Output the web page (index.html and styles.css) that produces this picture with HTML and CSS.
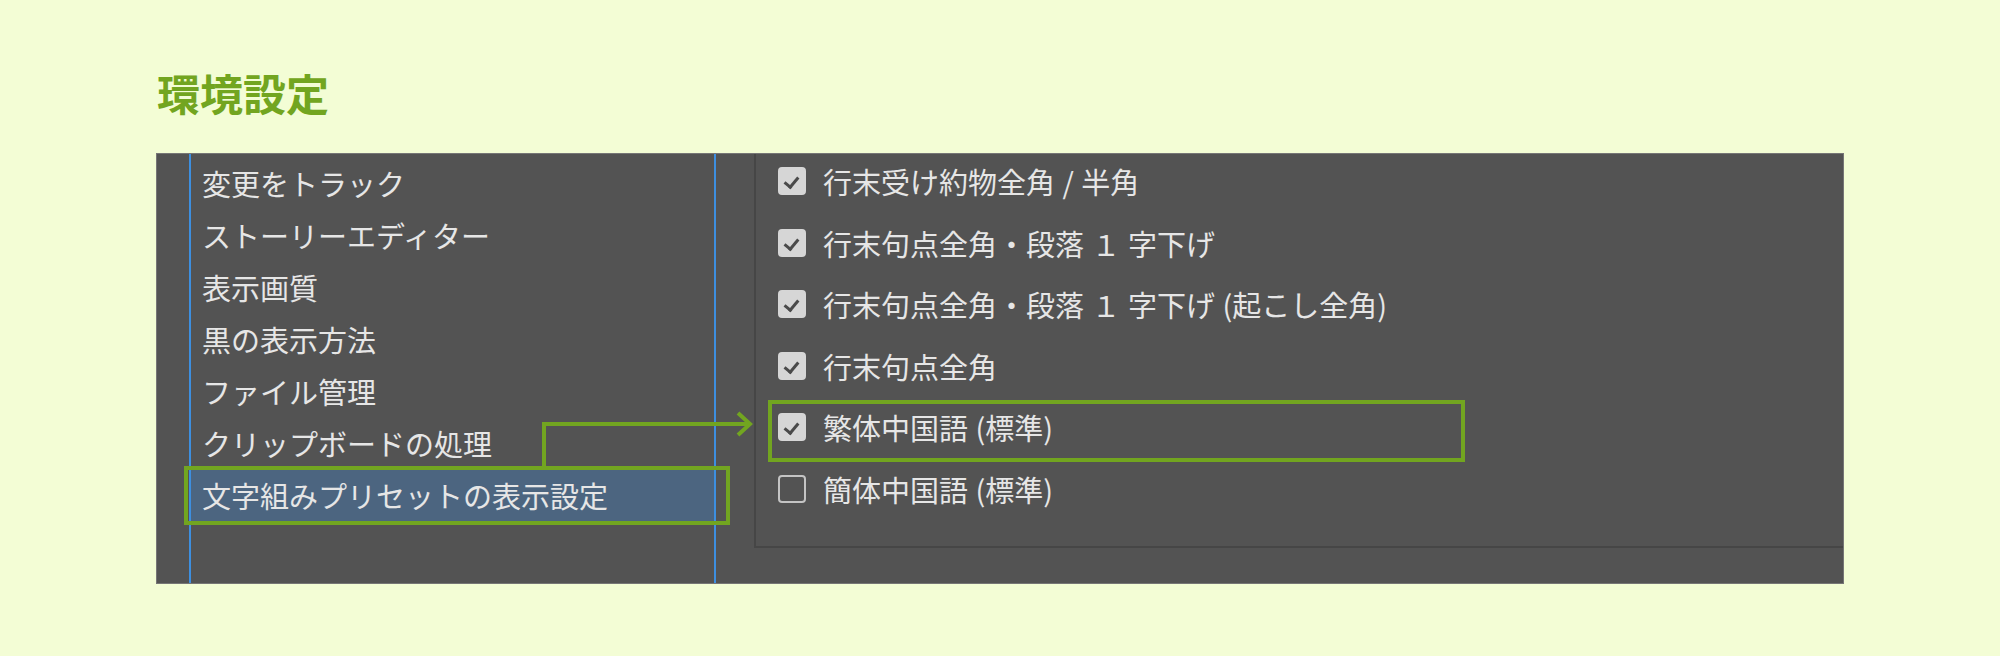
FILE: index.html
```html
<!DOCTYPE html>
<html lang="ja">
<head>
  <meta charset="UTF-8">
  <title>環境設定</title>
  <link rel="stylesheet" href="styles.css">
</head>
<body>
  <main class="page">
    <h1 class="title">環境設定</h1>

    <div class="prefs">
      <div class="gutter"></div>

      <ul class="nav">
        <li>変更をトラック</li>
        <li>ストーリーエディター</li>
        <li>表示画質</li>
        <li>黒の表示方法</li>
        <li>ファイル管理</li>
        <li>クリップボードの処理</li>
        <li class="selected">文字組みプリセットの表示設定</li>
      </ul>

      <div class="spacer"></div>

      <div class="options">
        <label class="option"><span class="check on"></span>行末受け約物全角 / 半角</label>
        <label class="option"><span class="check on"></span>行末句点全角・段落 １ 字下げ</label>
        <label class="option"><span class="check on"></span>行末句点全角・段落 １ 字下げ (起こし全角)</label>
        <label class="option"><span class="check on"></span>行末句点全角</label>
        <label class="option"><span class="check on"></span>繁体中国語 (標準)</label>
        <label class="option"><span class="check"></span>簡体中国語 (標準)</label>
      </div>

      <!-- annotation overlay -->
      <div class="mark mark-nav"></div>
      <div class="mark mark-option"></div>
      <svg class="connector" width="220" height="62" viewBox="0 0 220 62">
        <polyline points="7,60 7,15 212,15" fill="none" stroke="#72a520" stroke-width="4"/>
        <polyline points="201,4 213,15 201,26" fill="none" stroke="#72a520" stroke-width="4"/>
      </svg>
    </div>
  </main>
</body>
</html>
```

FILE: styles.css
```css
* {
  box-sizing: border-box;
}

body {
  margin: 0;
  background-color: #f3fdd5;
  font-family: "Noto Sans CJK JP", "Noto Sans", sans-serif;
}

.page {
  padding: 71px 0 0 156px;
}

.title {
  margin: 0 0 39px 1px;
  font-size: 43px;
  line-height: 43px;
  font-weight: 700;
  color: #72a520;
}

.prefs {
  position: relative;
  display: flex;
  width: 1688px;
  height: 431px;
  background: #535353;
  border: 1px solid #767676;
}

.gutter {
  width: 32px;
}

.nav {
  width: 527px;
  margin: 0;
  padding: 3px 0 0;
  list-style: none;
  border-left: 2px solid #3d8fe0;
  border-right: 2px solid #3d8fe0;
}

.nav li {
  height: 52px;
  padding-left: 11px;
  display: flex;
  align-items: center;
  font-size: 29px;
  color: #e6e6e6;
}

.nav li.selected {
  background: #4c6580;
}

.spacer {
  width: 38px;
}

.options {
  flex: 1;
  height: 394px;
  padding: 13px 0 0 22px;
  display: flex;
  flex-direction: column;
  gap: 33.5px;
  border-left: 2px solid #464646;
  border-bottom: 2px solid #464646;
}

.option {
  display: flex;
  align-items: center;
  gap: 17px;
  height: 28px;
  font-size: 29px;
  word-spacing: 1px;
  color: #e6e6e6;
  white-space: pre;
}

.check {
  position: relative;
  width: 28px;
  height: 28px;
  flex: none;
  border: 2px solid #c4c4c4;
  border-radius: 4px;
}

.check.on {
  background: #d6d6d6;
  border-color: #d6d6d6;
}

.check.on::after {
  content: "";
  position: absolute;
  left: 7px;
  top: 5px;
  width: 6px;
  height: 11px;
  border-right: 3px solid #4a4a4a;
  border-bottom: 3px solid #4a4a4a;
  transform: rotate(40deg);
}

.mark {
  position: absolute;
  border: 4px solid #72a520;
}

.mark-nav {
  left: 27px;
  top: 312px;
  width: 546px;
  height: 59px;
}

.mark-option {
  left: 611px;
  top: 246px;
  width: 697px;
  height: 62px;
}

.connector {
  position: absolute;
  left: 380px;
  top: 255px;
}
```
